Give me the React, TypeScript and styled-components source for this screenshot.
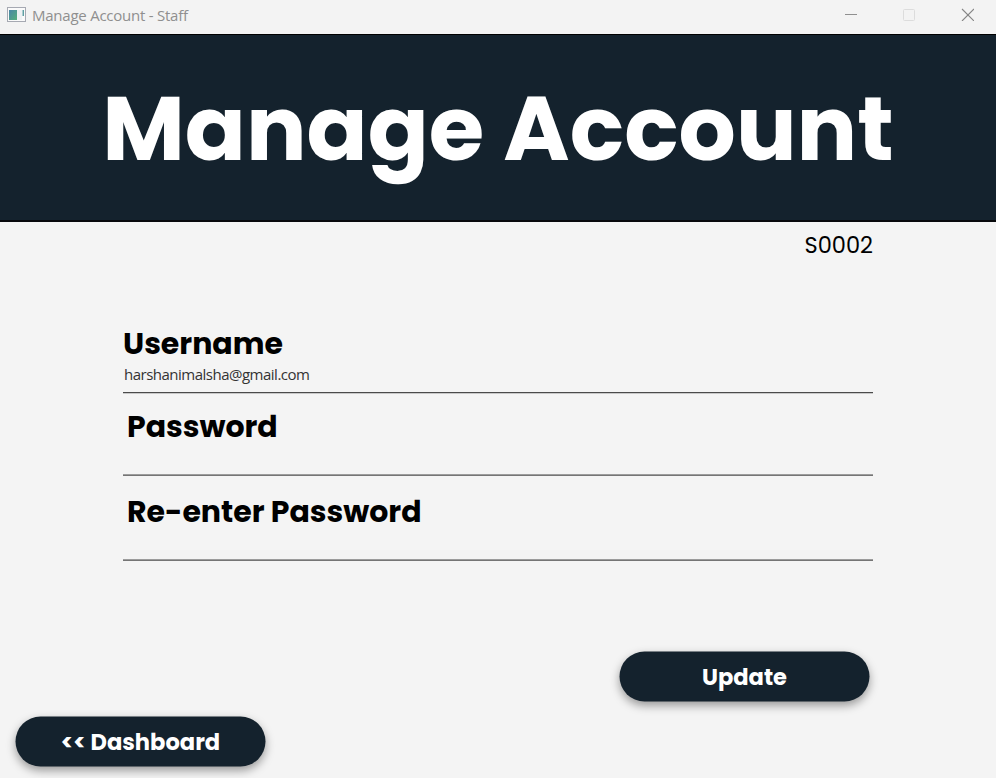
import React from 'react';
import styled, { createGlobalStyle } from 'styled-components';

const GlobalStyle = createGlobalStyle`
  * { box-sizing: border-box; }
  html, body { margin: 0; padding: 0; }
  body { background: #f4f4f4; overflow: hidden; }
`;

const display = `'Poppins', 'Inter', 'Liberation Sans', sans-serif`;
const system = `'Segoe UI', 'Open Sans', 'Noto Sans', sans-serif`;

const Window = styled.div`
  display: flex;
  flex-direction: column;
  width: 996px;
  height: 778px;
  background: #f4f4f4;
  font-family: ${display};
`;

const TitleBar = styled.header`
  display: flex;
  align-items: center;
  height: 34px;
  flex: none;
  padding: 0 22px 4px 7px;
  background: #f3f3f3;
`;

const WindowTitle = styled.span`
  flex: 1;
  margin-left: 6px;
  font-family: ${system};
  font-size: 15px;
  line-height: 20px;
  letter-spacing: -0.24px;
  color: #8f8f8f;
`;

const Controls = styled.div`
  display: flex;
  gap: 45px;
  margin-top: -1px;
`;

const Banner = styled.div`
  display: flex;
  justify-content: center;
  flex: none;
  height: 188px;
  padding-top: 41px;
  background: #14222d;
  border-top: 1px solid #000;
  border-bottom: 2px solid #08090c;
`;

const Heading = styled.h1`
  margin: 0;
  font-size: 90px;
  line-height: 106px;
  font-weight: 700;
  white-space: nowrap;
  color: #fff;
`;

const Content = styled.main`
  display: flex;
  flex-direction: column;
  padding: 9px 123px 0;
`;

const StaffId = styled.div`
  align-self: flex-end;
  height: 28px;
  font-size: 22.5px;
  line-height: 28px;
  color: #000;
`;

const Form = styled.form`
  margin-top: 63px;
`;

const Field = styled.div<{ $height: number; $indent?: number; $soft?: boolean }>`
  display: flex;
  flex-direction: column;
  height: ${(p) => p.$height}px;
  border-bottom: 1px solid ${(p) => (p.$soft ? '#9c9c9c' : '#4a4a4a')};
  box-shadow: 0 1px 0 ${(p) => (p.$soft ? '#757575' : '#c8c8c8')};

  label {
    padding-left: ${(p) => p.$indent ?? 0}px;
  }
`;

const Label = styled.label<{ $top: number }>`
  margin-top: ${(p) => p.$top}px;
  font-size: 30px;
  line-height: 40px;
  letter-spacing: -0.02px;
  font-weight: 700;
  color: #000;
`;

const Input = styled.input`
  height: 20px;
  width: 100%;
  padding: 0 1px;
  border: 0;
  outline: 0;
  background: transparent;
  font-family: ${system};
  font-size: 15px;
  letter-spacing: -0.5px;
  color: #333;
`;

const Actions = styled.footer`
  display: flex;
  flex-direction: column;
  gap: 15px;
  margin-top: auto;
  padding: 0 127px 11px 15px;
`;

const PillButton = styled.button<{ $end?: boolean }>`
  align-self: ${(p) => (p.$end ? 'flex-end' : 'flex-start')};
  width: 250px;
  height: 50px;
  padding: 0;
  border: 0;
  border-radius: 25px;
  background: #14222d;
  box-shadow: 0 4px 10px rgba(0, 0, 0, 0.38);
  font-family: inherit;
  font-size: 22.6px;
  font-weight: 700;
  color: #fff;
  transform: translate(0.5px, -0.5px);
`;

const AppIcon = () => (
  <svg width="19" height="16" viewBox="0 0 19 16">
    <defs>
      <linearGradient id="pane" x1="0" y1="0" x2="1" y2="1">
        <stop offset="0" stopColor="#4a86a8" />
        <stop offset="1" stopColor="#55b07c" />
      </linearGradient>
    </defs>
    <rect x="0.5" y="0.5" width="18" height="14" fill="#fafafa" stroke="#a6a9b2" />
    <rect x="2" y="3" width="8" height="10" fill="url(#pane)" />
    <rect x="10" y="3" width="5" height="10" fill="#eef2f4" />
    <rect x="15.5" y="3" width="1.5" height="6" fill="#5e9fa3" />
  </svg>
);

export default function App() {
  return (
    <>
      <GlobalStyle />
      <Window>
        <TitleBar>
          <AppIcon />
          <WindowTitle>Manage Account - Staff</WindowTitle>
          <Controls>
            <svg width="13" height="13" viewBox="0 0 13 13">
              <path d="M0 6.5h12" stroke="#8f8f8f" />
            </svg>
            <svg width="13" height="13" viewBox="0 0 13 13">
              <rect x="0.5" y="1.5" width="11" height="11" rx="1" fill="none" stroke="#dcdcdc" />
            </svg>
            <svg width="13" height="13" viewBox="0 0 13 13">
              <path d="M1 1l12 12M13 1l-12 12" stroke="#858585" strokeWidth="1.1" />
            </svg>
          </Controls>
        </TitleBar>
        <Banner>
          <Heading>Manage Account</Heading>
        </Banner>
        <Content>
          <StaffId>S0002</StaffId>
          <Form>
            <Field $height={71}>
              <Label $top={2} htmlFor="username">Username</Label>
              <Input id="username" defaultValue="harshanimalsha@gmail.com" />
            </Field>
            <Field $height={82} $indent={4} $soft>
              <Label $top={14} htmlFor="password">Password</Label>
              <Input id="password" type="password" />
            </Field>
            <Field $height={85} $indent={4} $soft>
              <Label $top={17} htmlFor="confirm">Re-enter Password</Label>
              <Input id="confirm" type="password" />
            </Field>
          </Form>
        </Content>
        <Actions>
          <PillButton $end>Update</PillButton>
          <PillButton>&lt;&lt; Dashboard</PillButton>
        </Actions>
      </Window>
    </>
  );
}
